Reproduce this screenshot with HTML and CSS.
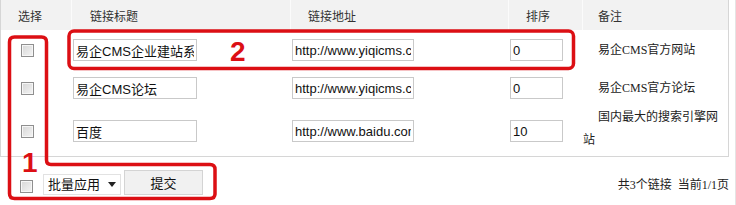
FILE: index.html
```html
<!DOCTYPE html>
<html lang="zh-CN">
<head>
    <meta charset="UTF-8">
    <title>友情链接管理</title>
    <link rel="stylesheet" href="styles.css">
</head>
<body>
    <div class="page">
        <table class="link-table">
            <colgroup>
                <col class="w-check">
                <col class="w-title">
                <col class="w-url">
                <col class="w-sort">
                <col class="w-note">
            </colgroup>
            <thead>
                <tr>
                    <th class="c-check">选择</th>
                    <th class="c-title">链接标题</th>
                    <th class="c-url">链接地址</th>
                    <th class="c-sort">排序</th>
                    <th class="c-note">备注</th>
                </tr>
            </thead>
            <tbody>
                <tr class="row-first">
                    <td class="c-check"><input type="checkbox" class="check"></td>
                    <td class="c-title"><input type="text" class="field field-title" value="易企CMS企业建站系统"></td>
                    <td class="c-url"><input type="text" class="field field-url" value="http://www.yiqicms.com"></td>
                    <td class="c-sort"><input type="text" class="field field-sort" value="0"></td>
                    <td class="c-note">易企CMS官方网站</td>
                </tr>
                <tr class="row-second">
                    <td class="c-check"><input type="checkbox" class="check"></td>
                    <td class="c-title"><input type="text" class="field field-title" value="易企CMS论坛"></td>
                    <td class="c-url"><input type="text" class="field field-url" value="http://www.yiqicms.com"></td>
                    <td class="c-sort"><input type="text" class="field field-sort" value="0"></td>
                    <td class="c-note">易企CMS官方论坛</td>
                </tr>
                <tr class="row-third">
                    <td class="c-check"><input type="checkbox" class="check"></td>
                    <td class="c-title"><input type="text" class="field field-title" value="百度"></td>
                    <td class="c-url"><input type="text" class="field field-url" value="http://www.baidu.com"></td>
                    <td class="c-sort"><input type="text" class="field field-sort" value="10"></td>
                    <td class="c-note">国内最大的搜索引擎网站</td>
                </tr>
            </tbody>
        </table>

        <div class="toolbar">
            <div class="batch">
                <input type="checkbox" class="check check-all">
                <span class="select-wrap">
                    <select class="batch-select">
                        <option>批量应用</option>
                        <option>删除</option>
                    </select>
                </span>
                <button class="btn">提交</button>
            </div>
            <div class="pager">共3个链接&nbsp;&nbsp;当前1/1页</div>
        </div>

        <!-- annotation marks drawn over the screenshot -->
        <svg class="marks" width="736" height="205" viewBox="0 0 736 205">
            <path class="mark-line" d="M9.5,42 Q9.5,37 14.5,37 L41.5,37 Q46.5,37 46.5,42 L46.5,160 Q46.5,164.5 51,164.5 L210,164.5 Q215,164.5 215,169.5 L215,193.5 Q215,198.5 210,198.5 L14.5,198.5 Q9.5,198.5 9.5,193.5 Z"/>
            <rect class="mark-line" x="69" y="31" width="504.5" height="37.5" rx="5" ry="5"/>
            <text class="mark-num" x="230" y="61">2</text>
            <text class="mark-num" x="22" y="172">1</text>
        </svg>
    </div>
</body>
</html>
```

FILE: styles.css
```css
* {
    box-sizing: border-box;
    margin: 0;
    padding: 0;
}

body {
    font-family: 'Liberation Sans', 'Noto Sans CJK SC', sans-serif;
    font-size: 12px;
    color: #222;
    background: #fff;
    width: 736px;
    height: 205px;
    overflow: hidden;
    border-right: 1px solid #e4e4e4;
}

.page {
    position: relative;
    width: 736px;
    height: 205px;
}

.link-table {
    width: 729px;
    table-layout: fixed;
    border-collapse: separate;
    border-spacing: 0;
    border: 1px solid #d6d6d6;
    border-top: none;
}

.w-check { width: 70px; }
.w-title { width: 219px; }
.w-url { width: 218px; }
.w-sort { width: 74px; }
.w-note { width: 146px; }

.link-table th {
    height: 30px;
    background: #f2f2f2;
    font-weight: normal;
    text-align: left;
    color: #333;
    border-left: 1px solid #fbfbfb;
}

.link-table th:first-child {
    border-left: none;
}

.link-table td {
    vertical-align: middle;
}

.row-first td { height: 40px; }
.row-second td { height: 36px; }
.row-third td { height: 50px; }

th.c-check { padding-left: 17px; }
th.c-title { padding-left: 18px; }
th.c-url { padding-left: 17px; }
th.c-sort { padding-left: 17px; }
th.c-note { padding-left: 15px; }

td.c-check { padding-left: 20px; }
td.c-title { padding-left: 2px; }
td.c-url { padding-left: 2px; }
td.c-sort { padding-left: 2px; }

td.c-note {
    padding: 0 1px 0 1px;
    text-indent: 15px;
    line-height: 23px;
    font-family: 'Liberation Serif', 'Noto Sans CJK SC', serif;
    color: #222;
}

.row-third td.c-note {
    padding-bottom: 4px;
}

.check {
    -webkit-appearance: none;
    appearance: none;
    display: block;
    width: 13px;
    height: 13px;
    border: 1px solid #8f8f8f;
    background: linear-gradient(135deg, #d6d6d6, #f4f4f4);
    box-shadow: inset 0 0 0 1px #f6f6f6;
}

.field {
    display: block;
    height: 22px;
    padding: 0 2px;
    border: 1px solid #c9c9c9;
    background: #fff;
    font-family: 'Liberation Sans', 'Noto Sans CJK SC', sans-serif;
    font-size: 13px;
    color: #111;
    outline: none;
}

.field-title { width: 124px; }
.field-url { width: 122px; }
.field-sort { width: 53px; }

.toolbar {
    width: 729px;
    display: flex;
    justify-content: space-between;
    align-items: center;
    padding-top: 13px;
}

.batch {
    display: flex;
    align-items: center;
    padding-left: 20px;
}

.check-all {
    margin-top: 7px;
    margin-right: 10px;
}

.select-wrap {
    position: relative;
    display: block;
    margin-top: 4px;
}

.select-wrap::after {
    content: '';
    position: absolute;
    right: 5px;
    top: 8px;
    border-left: 4px solid transparent;
    border-right: 4px solid transparent;
    border-top: 5px solid #222;
}

.batch-select {
    -webkit-appearance: none;
    appearance: none;
    display: block;
    width: 78px;
    height: 21px;
    padding-left: 4px;
    border: 1px solid #e2e2e2;
    background: #fff;
    font-family: 'Liberation Sans', 'Noto Sans CJK SC', sans-serif;
    font-size: 13px;
    color: #111;
}

.btn {
    width: 79px;
    height: 25px;
    margin-left: 3px;
    border: 1px solid #d4d4d4;
    background: #f1f1f1;
    font-family: 'Liberation Sans', 'Noto Sans CJK SC', sans-serif;
    font-size: 13px;
    color: #111;
}

.pager {
    font-family: 'Liberation Serif', 'Noto Sans CJK SC', serif;
    font-size: 12px;
    color: #222;
    margin-top: 3px;
}

.marks {
    position: absolute;
    left: 0;
    top: 0;
    pointer-events: none;
}

.mark-line {
    fill: none;
    stroke: #dc0f14;
    stroke-width: 3.5;
}

.mark-num {
    font-family: 'Liberation Sans', sans-serif;
    font-weight: bold;
    font-size: 28px;
    fill: #dc0f14;
}
```
